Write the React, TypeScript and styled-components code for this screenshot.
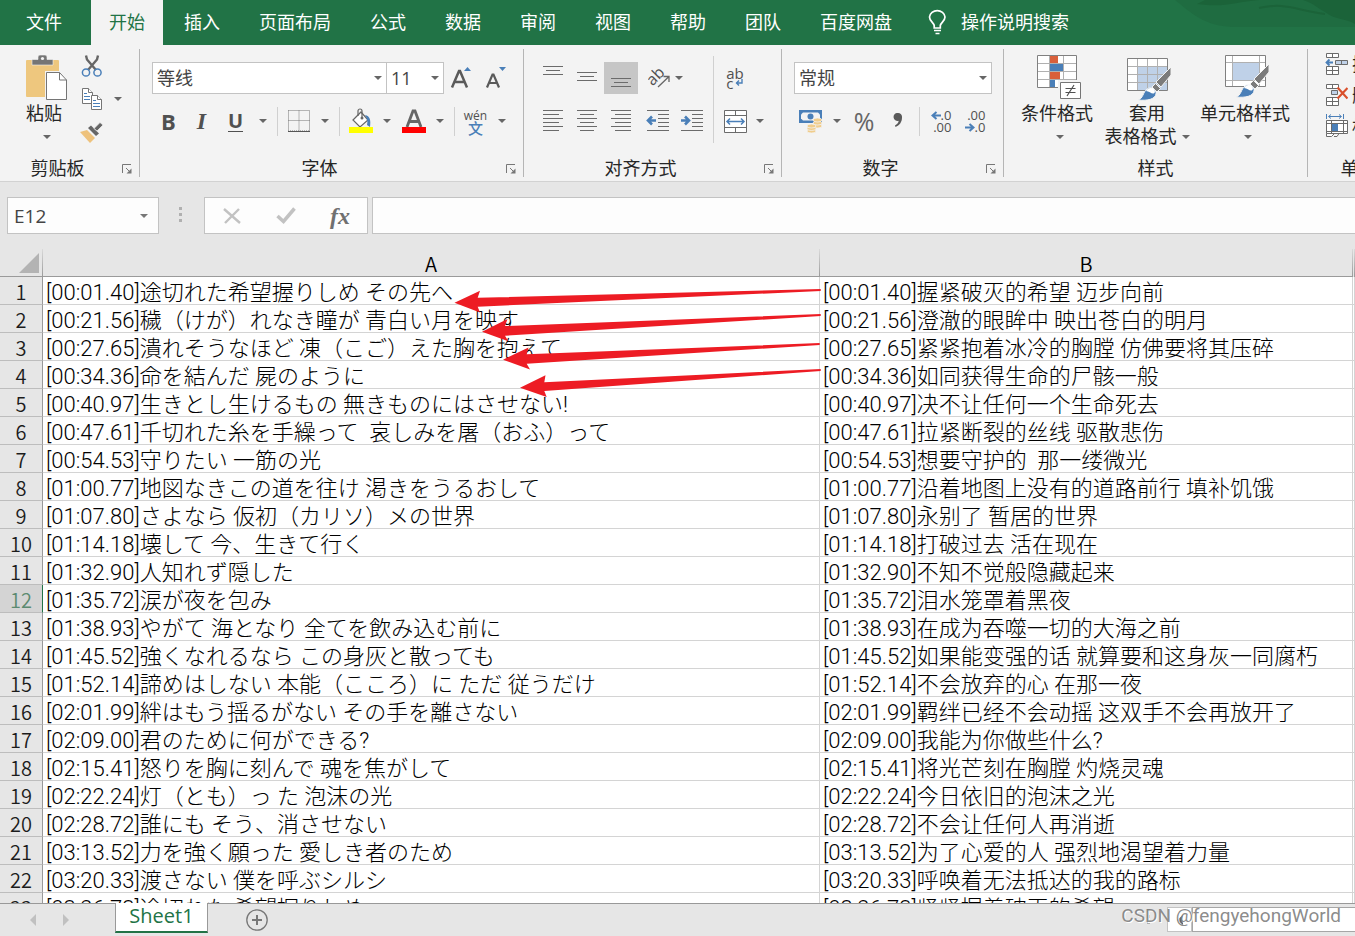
import React from "react";
import styled, { createGlobalStyle, css } from "styled-components";

const ui = `"Open Sans", "Noto Sans CJK SC", sans-serif`;
const blue = "#4a7fb8";
const ink = "#6b6b6b";

const GlobalStyle = createGlobalStyle`
  * { box-sizing: border-box; }
  body { margin: 0; background: #e6e6e6; }
  button, input, select { font: inherit; color: inherit; }
`;

const Window = styled.div`
  display: flex;
  flex-direction: column;
  height: 100vh;
  overflow: hidden;
  font-family: ${ui};
  font-size: 18px;
  line-height: 24px;
  color: #262626;
  background: #e6e6e6;
`;

const TabBar = styled.nav`
  position: relative;
  display: flex;
  flex: none;
  gap: 3px;
  height: 45px;
  background: #217346;
  overflow: hidden;
`;

const Pattern = styled.svg`
  position: absolute;
  top: 0;
  right: 0;
`;

const Tab = styled.button<{ $active?: boolean; $file?: boolean }>`
  flex: none;
  padding: 0 18px 2px;
  border: 0;
  background: ${(p) => (p.$active ? "#f3f3f3" : "transparent")};
  color: ${(p) => (p.$active ? "#217346" : "#fff")};
  white-space: nowrap;
  ${(p) =>
    p.$file &&
    css`
      width: 88px;
      padding: 0 0 2px 26px;
      text-align: left;
    `}
`;

const TellMe = styled.button`
  display: flex;
  align-items: center;
  gap: 14px;
  padding: 0 15px 2px;
  border: 0;
  background: transparent;
  color: #fff;
  white-space: nowrap;
`;

const Ribbon = styled.div`
  display: flex;
  flex: none;
  height: 137px;
  padding: 4px 0;
  background: #f3f3f3;
  border-bottom: 1px solid #d2d2d2;
  overflow: hidden;
`;

const Group = styled.section<{ $width: number }>`
  display: flex;
  flex-direction: column;
  flex: none;
  width: ${(p) => p.$width}px;
  border-right: 1px solid #b5b5b5;
`;

const GroupBody = styled.div<{ $pad?: number }>`
  display: flex;
  flex: none;
  height: 109px;
  padding: 0 0 0 ${(p) => p.$pad ?? 12}px;
`;

const GroupFoot = styled.div`
  display: flex;
  flex: none;
  align-items: center;
  height: 19px;
`;

const GroupLabel = styled.span`
  flex: 1;
  text-align: center;
`;

const Launcher = styled.button`
  display: flex;
  align-items: center;
  justify-content: center;
  width: 24px;
  height: 19px;
  padding: 3px 0 0;
  border: 0;
  background: transparent;
`;

const Rows = styled.div`
  display: flex;
  flex-direction: column;
  gap: 11px;
  padding-top: 13px;
`;

const Row = styled.div`
  display: flex;
  align-items: center;
  height: 32px;
`;

const Stack = styled.div`
  display: flex;
  flex-direction: column;
  gap: 1px;
  padding-top: 1px;
`;

const MenuStack = styled.div`
  display: flex;
  flex-direction: column;
`;

const Tool = styled.button<{ $w?: number; $on?: boolean; $gap?: number }>`
  display: flex;
  flex: none;
  align-items: center;
  justify-content: center;
  gap: 5px;
  width: ${(p) => p.$w ?? 34}px;
  height: 32px;
  margin-left: ${(p) => p.$gap ?? 0}px;
  padding: 0;
  border: 0;
  background: ${(p) => (p.$on ? "#c6c6c6" : "transparent")};
`;

const Divider = styled.span<{ $tall?: boolean }>`
  flex: none;
  width: 1px;
  height: ${(p) => (p.$tall ? 87 : 29)}px;
  margin: ${(p) => (p.$tall ? "7px 4px 0" : "0 4px")};
  background: #d0d0d0;
`;

const BigTool = styled.button<{ $w: number }>`
  display: flex;
  flex-direction: column;
  align-items: center;
  flex: none;
  width: ${(p) => p.$w}px;
  height: 104px;
  padding: 6px 0 0;
  border: 0;
  background: transparent;
  line-height: 23px;
  white-space: nowrap;
  > svg {
    flex: none;
    margin-left: 4px;
  }
`;

const BigCaption = styled.span`
  display: block;
  height: 23px;
  margin-top: 1px;
`;

const BigSecond = styled.span<{ $caretOnly?: boolean }>`
  display: flex;
  align-items: center;
  gap: 5px;
  height: 23px;
  padding-left: ${(p) => (p.$caretOnly ? 6 : 0)}px;
`;

const MenuTool = styled.button`
  display: flex;
  align-items: center;
  gap: 4px;
  height: 31px;
  padding: 0 0 1px;
  border: 0;
  background: transparent;
  white-space: nowrap;
`;

const SelectWrap = styled.label<{ $w: number; $join?: boolean }>`
  position: relative;
  flex: none;
  width: ${(p) => p.$w}px;
  margin-left: ${(p) => (p.$join ? -1 : 0)}px;
`;

const SelectBox = styled.select`
  display: block;
  width: 100%;
  height: 32px;
  padding: 0 4px;
  border: 1px solid #c3c3c3;
  border-radius: 0;
  background: #fff;
  color: #444;
  font-size: 18px;
  appearance: none;
`;

const SelectCaret = styled.span`
  position: absolute;
  right: 5px;
  top: 50%;
  display: flex;
  transform: translateY(-50%);
  pointer-events: none;
`;

const Glyph = styled.span<{ $size: number; $italic?: boolean; $serif?: boolean; $bold?: boolean; $underline?: boolean; $color?: string }>`
  font-family: ${(p) => (p.$serif ? `"Liberation Serif", serif` : ui)};
  font-size: ${(p) => p.$size}px;
  font-weight: ${(p) => (p.$bold ? 700 : 400)};
  font-style: ${(p) => (p.$italic ? "italic" : "normal")};
  line-height: 24px;
  color: ${(p) => p.$color ?? "#505050"};
  ${(p) =>
    p.$underline &&
    css`
      line-height: 20px;
      border-bottom: 1px solid #505050;
    `}
`;

const FormulaBar = styled.div`
  display: flex;
  flex: none;
  align-items: stretch;
  height: 67px;
  padding: 15px 0 15px 7px;
`;

const NameBox = styled.div`
  display: flex;
  align-items: center;
  width: 152px;
  padding-right: 10px;
  border: 1px solid #c3c3c3;
  background: #fdfdfd;
`;

const NameInput = styled.input`
  flex: 1;
  min-width: 0;
  padding: 0 0 0 6px;
  border: 0;
  background: transparent;
  color: #444;
  font-size: 19px;
`;

const Grip = styled.span`
  display: flex;
  flex-direction: column;
  align-items: center;
  gap: 3px;
  width: 45px;
  padding: 10px 2px 0 0;
  i {
    width: 3px;
    height: 3px;
    background: #b0b0b0;
  }
`;

const FormulaTools = styled.div`
  display: flex;
  align-items: center;
  width: 164px;
  margin-right: 4px;
  border: 1px solid #c3c3c3;
  background: #fdfdfd;
`;

const FormulaInput = styled.input`
  flex: 1;
  min-width: 0;
  padding: 0 8px;
  border: 1px solid #c3c3c3;
  border-right: 0;
  border-radius: 0;
  background: #fdfdfd;
`;

const Sheet = styled.main`
  position: relative;
  flex: 1;
  min-height: 0;
  overflow: hidden;
`;

const Grid = styled.table`
  width: 100%;
  table-layout: fixed;
  border-collapse: separate;
  border-spacing: 0;
  background: #fff;
  color: #000;
  font-size: 22px;
  font-weight: 300;
  font-family: Roboto, "Noto Sans CJK SC", sans-serif;
`;

const headBase = css`
  height: 28px;
  padding: 2px 0 0;
  line-height: 25px;
  background: #e6e6e6;
  font-family: "Noto Sans CJK SC", sans-serif;
  font-size: 20px;
  font-weight: 350;
  text-align: center;
`;

const ColHead = styled.th`
  ${headBase}
  border-bottom: 1px solid #999;
  border-right: 1px solid;
  border-image: linear-gradient(#dcdcdc, #999) 1;
`;

const Corner = styled(ColHead)`
  text-align: right;
  vertical-align: bottom;
  svg {
    display: block;
    margin: 0 3px 3px auto;
  }
`;

const RowHead = styled.th<{ $current?: boolean }>`
  ${headBase}
  border-right: 1px solid ${(p) => (p.$current ? "#217346" : "#999")};
  border-bottom: 1px solid #bdbdbd;
  background: ${(p) => (p.$current ? "#d4d4d4" : "#e6e6e6")};
  color: ${(p) => (p.$current ? "#5b8a70" : "#1c1c1c")};
`;

const Cell = styled.td`
  height: 28px;
  padding: 4px 0 0 3px;
  line-height: 23px;
  border-right: 1px solid #d4d4d4;
  border-bottom: 1px solid #d4d4d4;
  white-space: pre;
  overflow: hidden;
`;

const Arrows = styled.svg`
  position: absolute;
  left: 440px;
  top: 31px;
  pointer-events: none;
`;

const BottomBar = styled.footer`
  position: relative;
  display: flex;
  flex: none;
  height: 33px;
  border-top: 1px solid #999;
`;

const NavButton = styled.button`
  display: flex;
  align-items: center;
  justify-content: center;
  width: 33px;
  height: 32px;
  padding: 0;
  border: 0;
  background: transparent;
`;

const SheetNav = styled.div`
  display: flex;
  width: 115px;
  padding-left: 16px;
`;

const SheetTab = styled.button`
  width: 93px;
  height: 30px;
  margin-top: -1px;
  padding: 0 0 3px;
  border: 1px solid #999;
  border-top: 0;
  border-bottom: 2px solid #217346;
  background: #fff;
  color: #217346;
  font-size: 20px;
  font-weight: 500;
`;

const AddSheet = styled(NavButton)`
  margin-left: 32px;
`;

const ScrollArea = styled.div`
  display: flex;
  align-items: flex-start;
  margin-left: auto;
  padding-top: 3px;
`;

const ScrollButton = styled.button`
  display: flex;
  align-items: center;
  justify-content: center;
  width: 25px;
  height: 25px;
  padding: 0;
  border: 1px solid #c3c3c3;
  background: #fff;
`;

const ScrollThumb = styled.span`
  width: 163px;
  height: 25px;
  border: 1px solid #a6a6a6;
  border-right: 0;
  background: #fff;
`;

const ScrollGrip = styled(Grip)`
  width: 3px;
  margin-right: 17px;
  padding: 2px 0 0;
`;

const Watermark = styled.span`
  position: absolute;
  right: 14px;
  top: 0;
  color: rgba(125, 125, 125, 0.9);
  font-family: Roboto, "Noto Sans CJK SC", sans-serif;
  font-size: 19px;
  text-shadow: 1px 1px 0 #fff;
  pointer-events: none;
`;

const Caret = ({ color = "#666" }: { color?: string }) => (
  <svg width="8" height="4" viewBox="0 0 8 4">
    <path d="M0 0h8L4 4z" fill={color} />
  </svg>
);

const CaretTool = ({ w = 20, label }: { w?: number; label: string }) => (
  <Tool $w={w} aria-label={label}>
    <Caret />
  </Tool>
);

const LauncherIcon = () => (
  <svg width="10" height="10" viewBox="0 0 10 10" fill="none" stroke="#777">
    <path d="M.5 9V.5H9M4 4l4 4" />
    <path d="M9.5 4.500V9.500H4.500z" fill="#777" stroke="none" />
  </svg>
);

const Foot = ({ label, launcher = true }: { label: string; launcher?: boolean }) => (
  <GroupFoot>
    <GroupLabel>{label}</GroupLabel>
    {launcher && (
      <Launcher aria-label={`${label}设置`}>
        <LauncherIcon />
      </Launcher>
    )}
  </GroupFoot>
);

const Lines = ({ rows, y0, step }: { rows: [number, number][]; y0: number; step: number }) => (
  <svg width="24" height="26" viewBox="0 0 24 26" stroke="#6b6b6b">
    {rows.map(([a, b], i) => (
      <path key={i} d={`M${a} ${y0 + i * step + 0.5}H${b}`} />
    ))}
  </svg>
);

const PasteIcon = () => (
  <svg width="46" height="46" viewBox="1 0 46 46">
    <rect x="4" y="5" width="33" height="37" rx="1" fill="#eec77e" />
    <path d="M10 10V4.500h6V2a2 2 0 0 1 2-2h5a2 2 0 0 1 2 2v2.500h6V10z" fill="#757575" stroke="#f3f3f3" strokeWidth=".6" />
    <circle cx="20.500" cy="3.500" r="1.600" fill="#f3f3f3" />
    <path d="M23 16h16l7 8v22H23z" fill="#f3f3f3" />
    <path d="M24.500 17.500h13l7 7.500v19.500h-20z" fill="#fff" stroke="#757575" />
    <path d="M37.500 17.500V25h7" fill="none" stroke="#757575" />
  </svg>
);

const CutIcon = () => (
  <svg width="22" height="24" viewBox="0 0 22 24" fill="none">
    <path d="M5 1.500l1 4L15 16M17 1.500l-1 4L7 16" stroke="#666" strokeWidth="2.400" />
    <circle cx="5" cy="18.500" r="3.600" stroke={blue} strokeWidth="1.500" />
    <circle cx="16.500" cy="18.500" r="3.600" stroke={blue} strokeWidth="1.500" />
  </svg>
);

const CopyIcon = () => (
  <svg width="22" height="24" viewBox="0 0 22 24" fill="#fff" stroke="#757575">
    <path d="M1.500 1.500h6l4 4v11h-10z" />
    <path d="M7.500 1.500v4h4" />
    <path d="M3 6.500h3M3 9.500h6M3 12.500h6" stroke={blue} />
    <path d="M10.500 8.500h6l4 4v10h-10z" />
    <path d="M16.500 8.500v4h4" />
    <path d="M12 13.500h3M12 16.500h7M12 19.500h7" stroke={blue} />
  </svg>
);

const BrushIcon = () => (
  <svg width="24" height="22" viewBox="0 0 24 22">
    <path d="M0 11l7-2 8 8-5 5z" fill="#eec27c" />
    <path d="M8 7l3-2.500 8 8L16 15z" fill="#666" />
    <path d="M14 7.500L20 1.500l3 2.500-6 6z" fill="#666" stroke="#f3f3f3" strokeWidth=".7" />
  </svg>
);

const BordersIcon = () => (
  <svg width="22" height="22" viewBox="0 0 22 22" stroke="#757575" fill="none">
    <path d="M.5 .5H21.500V21H.5zM11 .5V21M.5 10.500H21.500" strokeDasharray="1 1" />
    <path d="M0 21.500H22" stroke="#555" />
  </svg>
);

const FillIcon = () => (
  <svg width="25" height="26" viewBox="0 0 25 26">
    <path d="M5 12l8-8 7 8-8 7z" fill="#fff" stroke="#666" strokeWidth="1.200" />
    <path d="M10 8V3a2 2 0 0 1 4 0v7" fill="none" stroke="#666" strokeWidth="1.200" />
    <circle cx="14" cy="10" r="1.500" fill="#666" />
    <path d="M17 7c5 1 6 5 5 12l-3-2c1-4 0-7-2-10z" fill={blue} />
    <rect x="1" y="19" width="24" height="6" fill="#ff0" />
  </svg>
);

const FontColorIcon = () => (
  <svg width="25" height="26" viewBox="0 0 25 26">
    <path d="M6 19L12 3h2l6 16M8.500 13.500h9" fill="none" stroke="#666" strokeWidth="2.800" />
    <rect x="1" y="19" width="24" height="6" fill="red" />
  </svg>
);

const GrowIcon = ({ small }: { small?: boolean }) => (
  <svg width="24" height="26" viewBox="0 0 24 26">
    {small ? (
      <>
        <path d="M4 22.500L9.500 9.500h1L16 22.500M6 18h8" fill="none" stroke="#5a5a5a" strokeWidth="2.200" />
        <path d="M16 2h7l-3.500 4z" fill={blue} />
      </>
    ) : (
      <>
        <path d="M3 22.500L10 6h1l7 16.500M6 17h9" fill="none" stroke="#5a5a5a" strokeWidth="2.500" />
        <path d="M15 6h7l-3.500-4z" fill={blue} />
      </>
    )}
  </svg>
);

const Pinyin = styled.span`
  display: flex;
  flex-direction: column;
  align-items: center;
  padding-top: 3px;
  font-size: 12px;
  line-height: 10px;
  color: #505050;
  b {
    font-size: 15px;
    line-height: 14px;
    font-weight: 500;
    color: ${blue};
  }
`;

const WrapText = styled.span`
  display: flex;
  flex-direction: column;
  font-size: 15px;
  line-height: 10px;
  color: #505050;
  span {
    display: flex;
    align-items: center;
    gap: 2px;
  }
`;

const Decimal = styled.span`
  display: flex;
  flex-direction: column;
  align-items: flex-end;
  font-size: 13px;
  line-height: 12px;
  color: #505050;
  span {
    display: flex;
    align-items: center;
  }
`;

const SmallArrow = ({ right }: { right?: boolean }) => (
  <svg width="10" height="9" viewBox="0 0 10 9" fill="none" stroke={blue} strokeWidth="2">
    {right ? <path d="M0 4.500h8M4.500 1l4 3.500-4 3.500" /> : <path d="M10 4.500H2M5.500 1l-4 3.500 4 3.500" />}
  </svg>
);

const OrientIcon = () => (
  <svg width="22" height="22" viewBox="0 0 22 22" fill="none">
    <g transform="rotate(-45 8 9)">
      <text x="-2" y="14" fontSize="16" fontFamily="Open Sans" fill="#505050">
        ab
      </text>
    </g>
    <path d="M10 20L21 9.500M15.500 9.500H21V15" stroke="#666" strokeWidth="1.300" />
  </svg>
);

const IndentIcon = ({ right }: { right?: boolean }) => (
  <svg width="24" height="24" viewBox="0 0 24 24" stroke="#6b6b6b">
    <path d="M1 1.500H23M12 5.500H23M12 9.500H23M12 13.500H23M12 17.500H23M1 21.500H23" />
    {right ? (
      <path d="M1 11.500h7M5 7.500l4 4-4 4" fill="none" stroke={blue} strokeWidth="2.600" />
    ) : (
      <path d="M3 11.500h7M6 7.500l-4 4 4 4" fill="none" stroke={blue} strokeWidth="2.600" />
    )}
  </svg>
);

const MergeIcon = () => (
  <svg width="23" height="23" viewBox="0 0 23 23" fill="none" stroke="#6b6b6b">
    <path d="M.5 .5h22v22H.5zM.5 5.500h22M.5 17.500h22M11.500 .5v5M11.500 17.500v5" fill="#fff" />
    <path d="M3 11.500h17M6 8.500l-3 3 3 3M17 8.500l3 3-3 3" stroke={blue} strokeWidth="1.500" />
  </svg>
);

const MoneyIcon = () => (
  <svg width="24" height="23" viewBox="0 0 24 23">
    <path d="M0 0h23v13H0z" fill={blue} />
    <path d="M4 2.500h15l2 2v4l-2 2H4l-2-2v-4z" fill="#f3f3f3" />
    <circle cx="11.500" cy="6.500" r="3" fill={blue} />
    <g fill="#f0cd8c" stroke="#f3f3f3" strokeWidth=".8">
      <ellipse cx="18.500" cy="16" rx="4.500" ry="2" />
      <ellipse cx="18.500" cy="13" rx="4.500" ry="2" />
      <ellipse cx="18.500" cy="10" rx="4.500" ry="2" />
      <ellipse cx="12.500" cy="21" rx="4.500" ry="2" />
      <ellipse cx="12.500" cy="18.500" rx="4.500" ry="2" />
      <ellipse cx="12.500" cy="16" rx="4.500" ry="2" />
    </g>
  </svg>
);

const CommaIcon = () => (
  <svg width="12" height="16" viewBox="0 0 12 16">
    <path d="M6 0a4 4 0 0 1 4 4.500c0 4.500-2.500 8-6.500 9.500L3 12.500c2-1 3.500-2.700 3.700-4.700A4 4 0 1 1 6 0z" fill="#5a5a5a" />
  </svg>
);

const ConditionalIcon = () => (
  <svg width="46" height="46" viewBox="0 0 46 46">
    <path d="M1.500 .5h39v32h-39z" fill="#fff" stroke="#808080" />
    <path d="M13.500 1v31M27.500 1v31M2 8.500h38M2 16.500h38M2 24.500h38" stroke="#b0b0b0" />
    <path d="M14 1h8v7h-8zM14 17h10v7H14z" fill="#d9603b" />
    <path d="M14 9h13v7H14zM14 25h5v7h-5z" fill={blue} />
    <path d="M22 25h24v21H22z" fill="#f3f3f3" />
    <path d="M24.500 27.500h20v16h-20z" fill="#fff" stroke="#757575" />
    <path d="M29.500 33.500h10M29.500 37.500h10M38 30l-7 11" stroke="#505050" strokeWidth="1.200" />
  </svg>
);

const PaintBrush = () => (
  <>
    <path d="M45 9v8L35 29l-5-5z" fill="#7b7b7b" stroke="#f3f3f3" />
    <path d="M34.500 30.500l-5-5-3.500 3.500 5 5z" fill="#7b7b7b" stroke="#f3f3f3" />
    <path d="M12 42c5-1 5-8 9-11 4-3 10 1 9 5-1 5-8 7-18 6z" fill={blue} stroke="#f3f3f3" />
    <path d="M20 33c3-5 9-3 9 1-2 4-5-1-9-1z" fill="#fff" />
  </>
);

const TableStyleIcon = () => (
  <svg width="46" height="46" viewBox="0 0 46 46">
    <path d="M1.500 3.500h40v32h-40z" fill="#fff" />
    <path d="M12 12h29v23H12z" fill="#bfd1e8" />
    <path d="M11.500 4v31M21.500 4v31M31.500 4v31M2 11.500h39M2 19.500h39M2 27.500h39" stroke="#b0b0b0" />
    <path d="M1.500 3.500h40v32h-40z" fill="none" stroke="#808080" />
    <g transform="translate(0 3)">
      <PaintBrush />
    </g>
  </svg>
);

const CellStyleIcon = () => (
  <svg width="46" height="46" viewBox="0 0 46 46">
    <path d="M1.500 .5h40v31h-40z" fill="#fff" />
    <path d="M8.500 1v31M35.500 1v31M2 7.500h39M2 25.500h39" stroke="#b0b0b0" />
    <path d="M9 8h26v17H9z" fill="#bfd1e8" />
    <path d="M1.500 .5h40v31h-40z" fill="none" stroke="#808080" />
    <PaintBrush />
  </svg>
);

const InsertIcon = () => (
  <svg width="23" height="22" viewBox="0 0 23 22" fill="#fff" stroke={ink}>
    <path d="M1.500 .5h12v4h-12zM7.500 .5v4M1.500 13.500h12v8h-12zM7.500 13.500v8M1.500 17.500h12" />
    <path d="M10.500 7.500h12v4h-12zM16.500 7.500v4" fill="#bfd1e8" />
    <path d="M8 9.500H2M4.500 6.500l-3 3 3 3" fill="none" stroke={blue} strokeWidth="1.800" />
  </svg>
);

const DeleteIcon = () => (
  <svg width="23" height="22" viewBox="0 0 23 22" fill="#fff" stroke={ink}>
    <path d="M1.500 .5h12v4h-12zM7.500 .5v4M1.500 13.500h12v8h-12zM7.500 13.500v8M1.500 17.500h12" />
    <path d="M6.500 6.500h6v4h-6z" fill="#bfd1e8" />
    <path d="M12.500 3.500l10 11M22.500 4l-10 10.500" stroke="#d9502c" strokeWidth="2.200" />
  </svg>
);

const FormatIcon = () => (
  <svg width="23" height="24" viewBox="0 0 23 24" fill="#fff" stroke={ink}>
    <path d="M1.500 6.500h21v13h-21zM6.500 6.500v13M18.500 6.500v13M1.500 9.500h21M1.500 17.500h21M1.500 19.500v3h5l3-3M9 22.500h3l2-3" />
    <path d="M7 10h6v7H7z" fill={blue} stroke="none" />
    <path d="M1.500 0v5M18.500 0v5M4 2.500h12M6 .5l-2.500 2L6 4.500M14 .5l2.500 2-2.500 2" fill="none" stroke={blue} />
  </svg>
);

const lyrics: [string, string, string][] = [
  ["00:01.40", "途切れた希望握りしめ その先へ", "握紧破灭的希望 迈步向前"],
  ["00:21.56", "穢（けが）れなき瞳が 青白い月を映す", "澄澈的眼眸中 映出苍白的明月"],
  ["00:27.65", "潰れそうなほど 凍（こご）えた胸を抱えて", "紧紧抱着冰冷的胸膛 仿佛要将其压碎"],
  ["00:34.36", "命を結んだ 屍のように", "如同获得生命的尸骸一般"],
  ["00:40.97", "生きとし生けるもの 無きものにはさせない!", "决不让任何一个生命死去"],
  ["00:47.61", "千切れた糸を手繰って  哀しみを屠（おふ）って", "拉紧断裂的丝线 驱散悲伤"],
  ["00:54.53", "守りたい 一筋の光", "想要守护的  那一缕微光"],
  ["01:00.77", "地図なきこの道を往け 渇きをうるおして", "沿着地图上没有的道路前行 填补饥饿"],
  ["01:07.80", "さよなら 仮初（カリソ）メの世界", "永别了 暂居的世界"],
  ["01:14.18", "壊して 今、生きて行く", "打破过去 活在现在"],
  ["01:32.90", "人知れず隠した", "不知不觉般隐藏起来"],
  ["01:35.72", "涙が夜を包み", "泪水笼罩着黑夜"],
  ["01:38.93", "やがて 海となり 全てを飲み込む前に", "在成为吞噬一切的大海之前"],
  ["01:45.52", "強くなれるなら この身灰と散っても", "如果能变强的话 就算要和这身灰一同腐朽"],
  ["01:52.14", "諦めはしない 本能（こころ）に ただ 従うだけ", "不会放弃的心 在那一夜"],
  ["02:01.99", "絆はもう揺るがない その手を離さない", "羁绊已经不会动摇 这双手不会再放开了"],
  ["02:09.00", "君のために何ができる?", "我能为你做些什么?"],
  ["02:15.41", "怒りを胸に刻んで 魂を焦がして", "将光芒刻在胸膛 灼烧灵魂"],
  ["02:22.24", "灯（とも）っ た 泡沫の光", "今日依旧的泡沫之光"],
  ["02:28.72", "誰にも そう、消させない", "不会让任何人再消逝"],
  ["03:13.52", "力を強く願った 愛しき者のため", "为了心爱的人 强烈地渴望着力量"],
  ["03:20.33", "渡さない 僕を呼ぶシルシ", "呼唤着无法抵达的我的路标"],
  ["03:26.73", "途切れた 希望握りしめ", "紧紧握着破灭的希望"],
];

const tabs = ["插入", "页面布局", "公式", "数据", "审阅", "视图", "帮助", "团队", "百度网盘"];

export default function App() {
  return (
    <Window>
      <GlobalStyle />
      <TabBar>
        <Pattern width="180" height="45" viewBox="0 0 180 45" aria-hidden="true">
          <path d="M0 0H180V27H60C30 27 15 12 0 0z" fill="#1f6c41" />
          <path d="M22 4C50 8 60 2 84 0H30zM150 12C160 20 170 18 180 24V0H128C140 4 142 8 150 12z" fill="#1b6339" />
          <path d="M84 8C110 2 120 10 150 14" stroke="#1b6339" strokeWidth="2" fill="none" />
        </Pattern>
        <Tab $file>文件</Tab>
        <Tab $active>开始</Tab>
        {tabs.map((t) => (
          <Tab key={t}>{t}</Tab>
        ))}
        <TellMe>
          <svg width="19" height="26" viewBox="0 0 19 26" fill="none" stroke="#fff" strokeWidth="1.700">
            <path d="M6.200 19v-2.500C5.500 13.500 1.500 12 1.500 8A7.800 7.300 0 0 1 17 8c0 4-4 5.500-4.700 8.500V19z" />
            <path d="M6 21.500h7M7.500 24.500h4" />
          </svg>
          操作说明搜索
        </TellMe>
      </TabBar>

      <Ribbon>
        <Group $width={140}>
          <GroupBody $pad={13}>
            <BigTool $w={62}>
              <PasteIcon />
              <BigCaption>粘贴</BigCaption>
              <BigSecond $caretOnly>
                <Caret />
              </BigSecond>
            </BigTool>
            <Stack>
              <Row>
                <Tool aria-label="剪切">
                  <CutIcon />
                </Tool>
              </Row>
              <Row>
                <Tool aria-label="复制">
                  <CopyIcon />
                </Tool>
                <CaretTool w={18} label="复制选项" />
              </Row>
              <Row>
                <Tool aria-label="格式刷">
                  <BrushIcon />
                </Tool>
              </Row>
            </Stack>
          </GroupBody>
          <Foot label="剪贴板" />
        </Group>

        <Group $width={384}>
          <GroupBody>
            <Rows>
              <Row>
                <SelectWrap $w={235}>
                  <SelectBox aria-label="字体">
                    <option>等线</option>
                  </SelectBox>
                  <SelectCaret>
                    <Caret />
                  </SelectCaret>
                </SelectWrap>
                <SelectWrap $w={58} $join>
                  <SelectBox aria-label="字号">
                    <option>11</option>
                  </SelectBox>
                  <SelectCaret>
                    <Caret />
                  </SelectCaret>
                </SelectWrap>
                <Tool aria-label="增大字号">
                  <GrowIcon />
                </Tool>
                <Tool aria-label="减小字号">
                  <GrowIcon small />
                </Tool>
              </Row>
              <Row>
                <Tool $w={33}>
                  <Glyph $size={22} $bold>
                    B
                  </Glyph>
                </Tool>
                <Tool $w={33}>
                  <Glyph $size={24} $bold $italic $serif>
                    I
                  </Glyph>
                </Tool>
                <Tool $w={35}>
                  <Glyph $size={20} $bold $underline>
                    U
                  </Glyph>
                </Tool>
                <CaretTool label="下划线选项" />
                <Divider />
                <Tool $w={33} aria-label="边框">
                  <BordersIcon />
                </Tool>
                <CaretTool label="边框选项" />
                <Divider />
                <Tool $w={33} aria-label="填充颜色">
                  <FillIcon />
                </Tool>
                <CaretTool label="填充颜色选项" />
                <Tool $w={33} aria-label="字体颜色">
                  <FontColorIcon />
                </Tool>
                <CaretTool label="字体颜色选项" />
                <Divider />
                <Tool $w={33}>
                  <Pinyin>
                    wén<b>文</b>
                  </Pinyin>
                </Tool>
                <CaretTool label="拼音选项" />
              </Row>
            </Rows>
          </GroupBody>
          <Foot label="字体" />
        </Group>

        <Group $width={258}>
          <GroupBody>
            <Rows>
              <Row>
                <Tool aria-label="顶端对齐">
                  <Lines rows={[[2, 22], [5, 19], [2, 22]]} y0={1} step={4} />
                </Tool>
                <Tool aria-label="垂直居中">
                  <Lines rows={[[2, 22], [5, 19], [2, 22]]} y0={7} step={4} />
                </Tool>
                <Tool $on aria-label="底端对齐">
                  <Lines rows={[[2, 22], [5, 19], [2, 22]]} y0={13} step={4} />
                </Tool>
                <Tool $w={44} $gap={5} aria-label="方向">
                  <OrientIcon />
                  <Caret />
                </Tool>
              </Row>
              <Row>
                <Tool aria-label="左对齐">
                  <Lines rows={[[2, 22], [2, 18], [2, 22], [2, 18], [2, 22], [2, 18]]} y0={2} step={4} />
                </Tool>
                <Tool aria-label="居中">
                  <Lines rows={[[2, 22], [5, 19], [2, 22], [5, 19], [2, 22], [5, 19]]} y0={2} step={4} />
                </Tool>
                <Tool aria-label="右对齐">
                  <Lines rows={[[2, 22], [6, 22], [2, 22], [6, 22], [2, 22], [6, 22]]} y0={2} step={4} />
                </Tool>
                <Tool $gap={3} aria-label="减少缩进量">
                  <IndentIcon />
                </Tool>
                <Tool aria-label="增加缩进量">
                  <IndentIcon right />
                </Tool>
              </Row>
            </Rows>
            <Divider $tall />
            <Rows>
              <Row>
                <Tool aria-label="自动换行">
                  <WrapText>
                    ab
                    <span>
                      c
                      <svg width="8" height="8" viewBox="0 0 8 8" fill="none" stroke={blue} strokeWidth="1.400">
                        <path d="M7 0v4H1M4 1.500L1.500 4 4 6.500" />
                      </svg>
                    </span>
                  </WrapText>
                </Tool>
              </Row>
              <Row>
                <Tool aria-label="合并后居中">
                  <MergeIcon />
                </Tool>
                <CaretTool w={16} label="合并选项" />
              </Row>
            </Rows>
          </GroupBody>
          <Foot label="对齐方式" />
        </Group>

        <Group $width={222}>
          <GroupBody>
            <Rows>
              <Row>
                <SelectWrap $w={198}>
                  <SelectBox aria-label="数字格式">
                    <option>常规</option>
                  </SelectBox>
                  <SelectCaret>
                    <Caret />
                  </SelectCaret>
                </SelectWrap>
              </Row>
              <Row>
                <Tool $w={33} aria-label="会计数字格式">
                  <MoneyIcon />
                </Tool>
                <CaretTool label="会计数字格式选项" />
                <Tool>
                  <Glyph $size={25} $color="#666">
                    %
                  </Glyph>
                </Tool>
                <Tool aria-label="千位分隔样式">
                  <CommaIcon />
                </Tool>
                <Divider />
                <Tool aria-label="增加小数位数">
                  <Decimal>
                    <span>
                      <SmallArrow />
                      .0
                    </span>
                    <span>.00</span>
                  </Decimal>
                </Tool>
                <Tool aria-label="减少小数位数">
                  <Decimal>
                    <span>.00</span>
                    <span>
                      <SmallArrow right />
                      .0
                    </span>
                  </Decimal>
                </Tool>
              </Row>
            </Rows>
          </GroupBody>
          <Foot label="数字" />
        </Group>

        <Group $width={304}>
          <GroupBody $pad={8}>
            <BigTool $w={90}>
              <ConditionalIcon />
              <BigCaption>条件格式</BigCaption>
              <BigSecond $caretOnly>
                <Caret />
              </BigSecond>
            </BigTool>
            <BigTool $w={90}>
              <TableStyleIcon />
              <BigCaption>套用</BigCaption>
              <BigSecond>
                表格格式
                <Caret />
              </BigSecond>
            </BigTool>
            <BigTool $w={106}>
              <CellStyleIcon />
              <BigCaption>单元格样式</BigCaption>
              <BigSecond $caretOnly>
                <Caret />
              </BigSecond>
            </BigTool>
          </GroupBody>
          <Foot label="样式" launcher={false} />
        </Group>

        <Group $width={120}>
          <GroupBody $pad={17}>
            <MenuStack>
              <MenuTool>
                <InsertIcon />
                插入
              </MenuTool>
              <MenuTool>
                <DeleteIcon />
                删除
              </MenuTool>
              <MenuTool>
                <FormatIcon />
                格式
              </MenuTool>
            </MenuStack>
          </GroupBody>
          <Foot label="单元格" launcher={false} />
        </Group>
      </Ribbon>

      <FormulaBar>
        <NameBox>
          <NameInput aria-label="名称框" defaultValue="E12" />
          <Caret color="#777" />
        </NameBox>
        <Grip>
          <i />
          <i />
          <i />
        </Grip>
        <FormulaTools>
          <Tool $w={54} aria-label="取消">
            <svg width="18" height="16" viewBox="0 0 18 16" fill="none" stroke="#c2c2c2" strokeWidth="2.400">
              <path d="M1 1l16 14M16 1L2 15" />
            </svg>
          </Tool>
          <Tool $w={54} aria-label="输入">
            <svg width="20" height="17" viewBox="0 0 20 17" fill="none" stroke="#c2c2c2" strokeWidth="3.500">
              <path d="M1.500 9l6 5.500L18.500 1.500" />
            </svg>
          </Tool>
          <Tool $w={54} aria-label="插入函数">
            <Glyph $size={24} $bold $italic $serif $color="#707070">
              fx
            </Glyph>
          </Tool>
        </FormulaTools>
        <FormulaInput aria-label="编辑栏" />
      </FormulaBar>

      <Sheet>
        <Grid>
          <colgroup>
            <col style={{ width: 43 }} />
            <col style={{ width: 777 }} />
            <col style={{ width: 533 }} />
            <col />
          </colgroup>
          <thead>
            <tr>
              <Corner aria-label="全选">
                <svg width="20" height="20" viewBox="0 0 20 20">
                  <path d="M20 0V20H0z" fill="#b3b3b3" />
                </svg>
              </Corner>
              <ColHead>A</ColHead>
              <ColHead>B</ColHead>
              <ColHead />
            </tr>
          </thead>
          <tbody>
            {lyrics.map(([time, ja, zh], i) => (
              <tr key={time}>
                <RowHead $current={i === 11}>{i + 1}</RowHead>
                <Cell lang="ja">{`[${time}]${ja}`}</Cell>
                <Cell lang="zh-CN">{`[${time}]${zh}`}</Cell>
                <Cell />
              </tr>
            ))}
          </tbody>
        </Grid>
        <Arrows width="400" height="130" viewBox="440 280 400 130" fill="#ed1c24" aria-hidden="true">
          <path d="M454.500 302.700L480 290.700L477.700 297.700L820.700 289V291L477.700 306.700L480 312.500z" />
          <path d="M482 331.700L507.500 319L505 326L820.700 314V316L505 335.700L508.300 341.200z" />
          <path d="M503 359.700L528.500 347.500L526.700 354.300L819.700 343V345L526.700 363.700L530 369.500z" />
          <path d="M520 387.700L545.500 375.300L544.300 382.300L820.700 369V371L544.300 391L546.700 397z" />
        </Arrows>
      </Sheet>

      <BottomBar>
        <SheetNav>
          <NavButton aria-label="上一个工作表">
            <svg width="6" height="12" viewBox="0 0 6 12">
              <path d="M6 0v12L0 6z" fill="#c0c0c0" />
            </svg>
          </NavButton>
          <NavButton aria-label="下一个工作表">
            <svg width="6" height="12" viewBox="0 0 6 12">
              <path d="M0 0v12l6-6z" fill="#c0c0c0" />
            </svg>
          </NavButton>
        </SheetNav>
        <SheetTab>Sheet1</SheetTab>
        <AddSheet aria-label="新工作表">
          <svg width="22" height="22" viewBox="0 0 22 22" fill="none" stroke="#777">
            <circle cx="11" cy="11" r="10.200" strokeWidth="1.300" />
            <path d="M11 6v10M6 11h10" strokeWidth="2" />
          </svg>
        </AddSheet>
        <ScrollArea>
          <ScrollGrip>
            <i />
            <i />
            <i />
          </ScrollGrip>
          <ScrollButton aria-label="向左滚动">
            <svg width="6" height="10" viewBox="0 0 6 10">
              <path d="M6 0v10L0 5z" fill="#666" />
            </svg>
          </ScrollButton>
          <ScrollThumb />
        </ScrollArea>
        <Watermark>CSDN @fengyehongWorld</Watermark>
      </BottomBar>
    </Window>
  );
}
